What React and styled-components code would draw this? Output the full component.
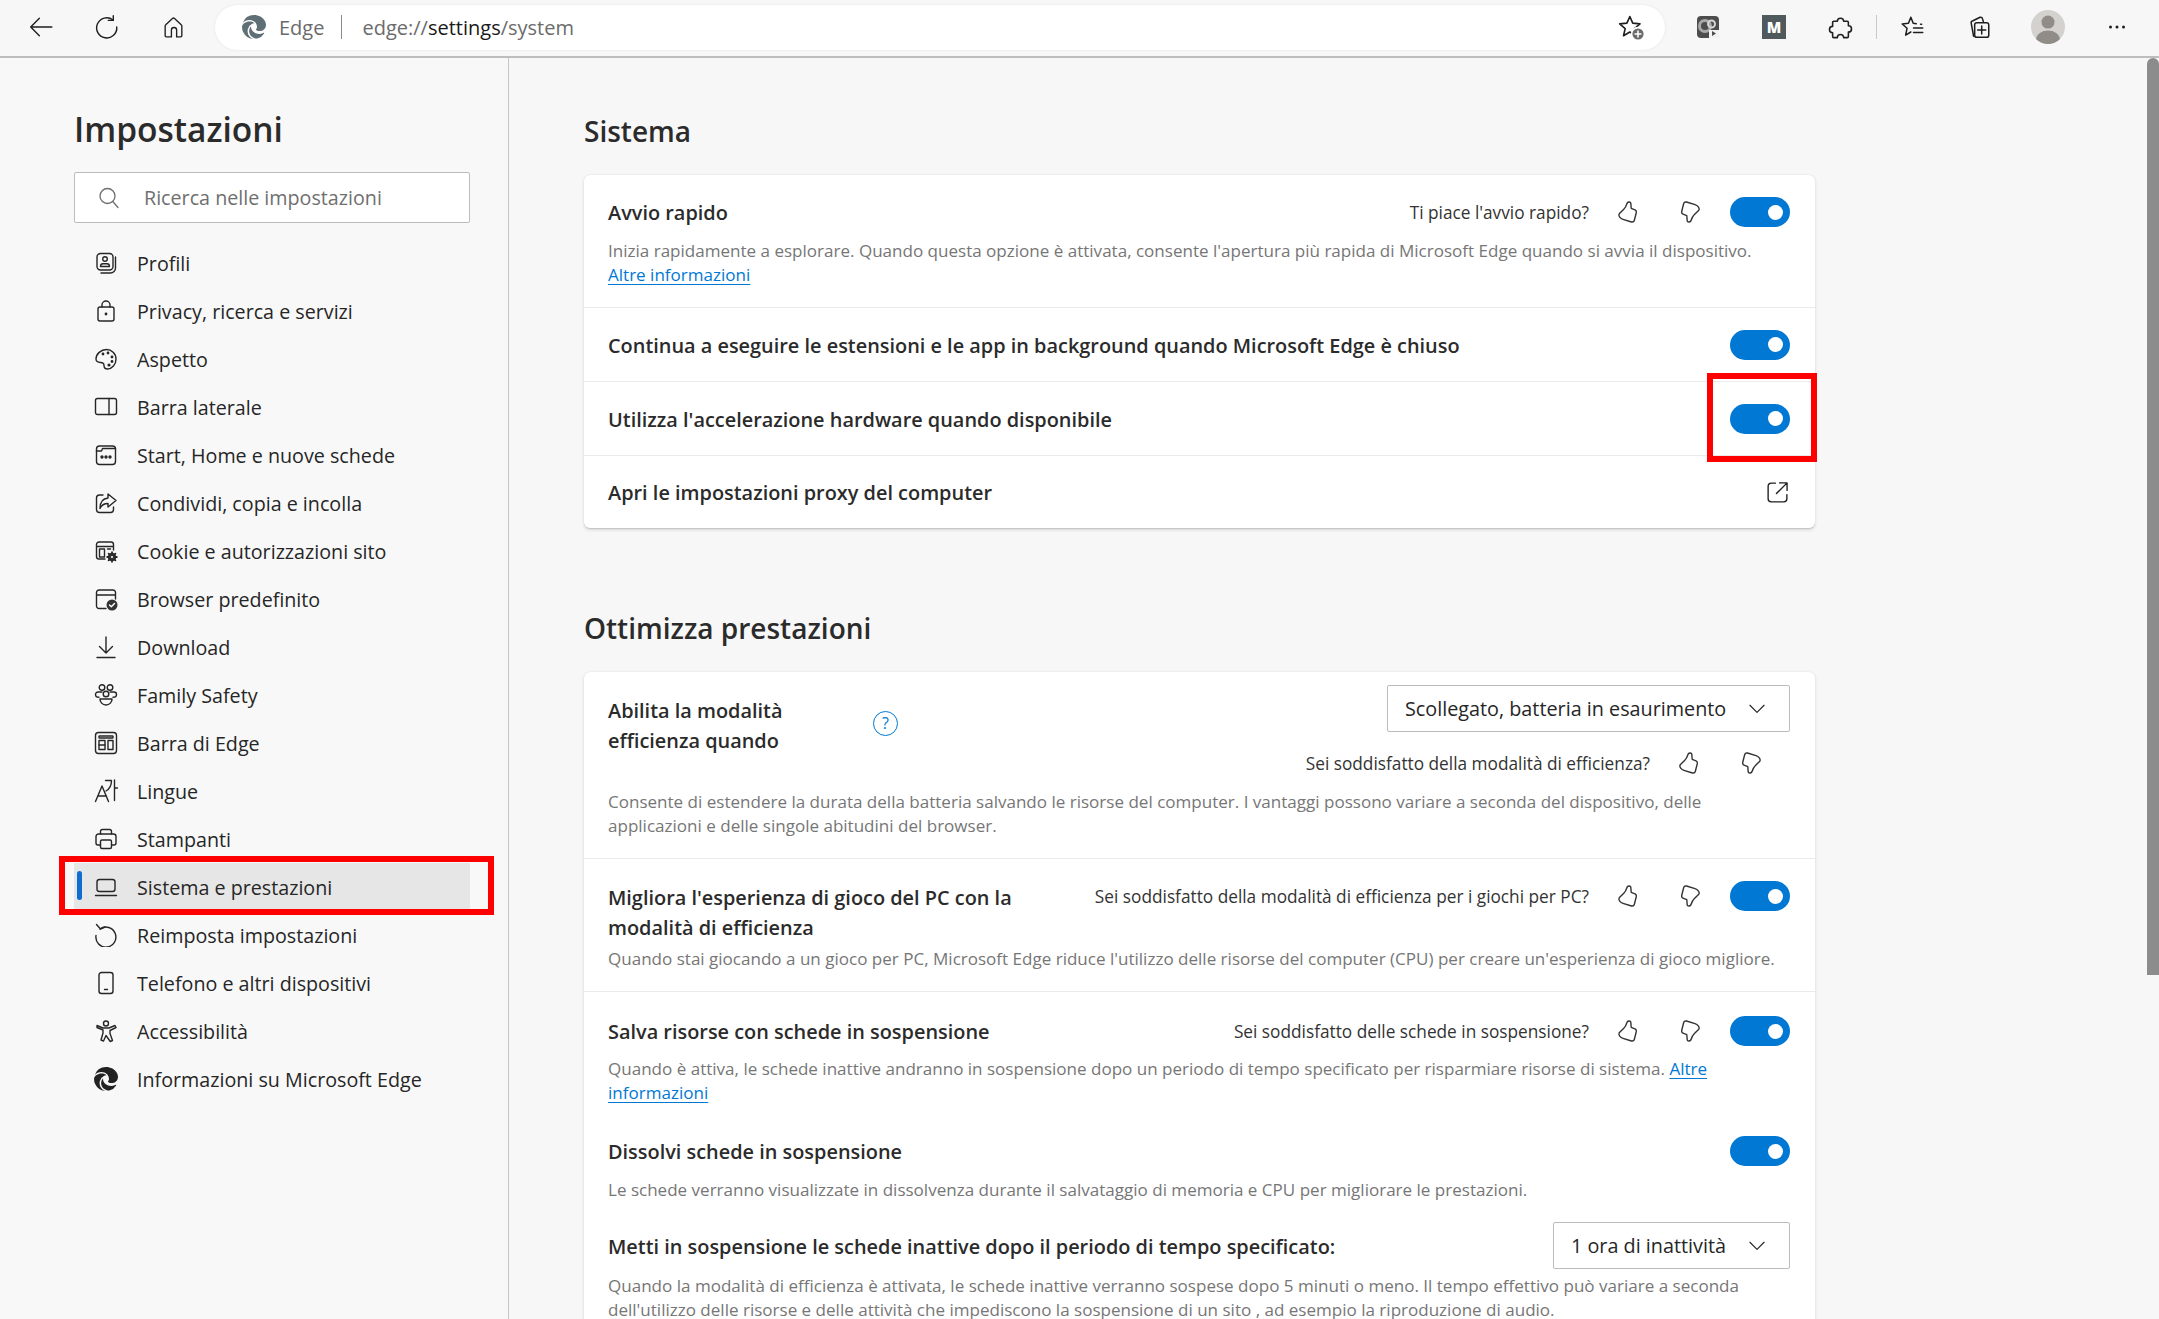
import styled, { createGlobalStyle } from "styled-components"
import { BsBrowserEdge } from "react-icons/bs"

const GlobalStyle = createGlobalStyle`
html, body {
  margin: 0;
  height: 100%;
  background: #f7f7f7;
  overflow: hidden;
}
* { box-sizing: border-box; }
body {
  font-family: "Open Sans", "Noto Sans", sans-serif;
  color: #1f1f1f;
}
`

const Page = styled.div`
height: 1319px;
display: flex;
flex-direction: column;
overflow: hidden;
`

/* browser chrome */
const Toolbar = styled.header`
height: 58px;
flex: none;
display: flex;
align-items: center;
padding: 0 9px 2px 8px;
background: #f7f7f7;
border-bottom: 2px solid #bdbdbd;
`
const ToolButton = styled.div`
width: 66px;
height: 40px;
flex: none;
display: flex;
align-items: center;
justify-content: center;
margin-left: ${p => p.$gap || 0}px;
color: #1f1f1f;
`
const AddressBar = styled.div`
width: 1450px;
height: 45px;
margin-left: 9px;
margin-right: 10px;
flex: none;
display: flex;
align-items: center;
background: #fff;
border-radius: 23px;
padding: 0 20px 0 27px;
box-shadow: 0 0 3px rgba(0, 0, 0, 0.08);
`
const SiteName = styled.span`
font-size: 20px;
color: #6b6b6b;
margin-left: 13px;
`
const AddressSep = styled.span`
width: 1px;
height: 24px;
background: #8a8a8a;
margin: 0 20px 0 17px;
`
const Url = styled.span`
font-size: 20px;
color: #6b6b6b;
flex: 1;
b { font-weight: 400; color: #1a1a1a; }
`
const ToolSep = styled.div`
width: 1px;
height: 24px;
background: #c8c8c8;
margin: 0 3px;
flex: none;
`
const MBadge = styled.div`
width: 24px;
height: 24px;
background: #50595b;
color: #fff;
font-size: 15px;
font-weight: 800;
display: flex;
align-items: center;
justify-content: center;
`
const Body = styled.div`
flex: 1;
display: flex;
min-height: 0;
`

/* left column */
const Sidebar = styled.aside`
width: 509px;
flex: none;
padding: 53px 38px 0 74px;
background: #f8f8f8;
border-right: 1px solid #c6c6c6;
`
const PageTitle = styled.h1`
margin: 0 0 25px 0;
font-size: 33.5px;
line-height: 36px;
font-weight: 600;
color: #2b2b2b;
`
const SearchBox = styled.div`
height: 51px;
display: flex;
align-items: center;
gap: 23px;
padding-left: 22px;
background: #fff;
border: 1px solid #bcbcbc;
border-radius: 2px;
margin-bottom: 16px;
font-size: 19.7px;
color: #6f6f6f;
`
const NavList = styled.nav`
display: flex;
flex-direction: column;
`
const NavItem = styled.div`
position: relative;
height: 48px;
display: flex;
align-items: center;
gap: 19px;
padding-left: 20px;
font-size: 19.7px;
color: #262626;
background: ${p => (p.$active ? "#e6e6e6" : "transparent")};
${p => p.$active && `
  &::before {
    content: "";
    position: absolute;
    left: 3px;
    top: 8px;
    width: 5px;
    height: 29px;
    border-radius: 3px;
    background: #0f6cd0;
  }
  &::after {
    content: "";
    position: absolute;
    left: -15px;
    right: -24px;
    top: -7px;
    bottom: -4px;
    border: 6px solid #ff0000;
  }
`}
`

/* right column */
const Main = styled.main`
flex: 1;
min-width: 0;
padding: 55px 332px 0 75px;
overflow: hidden;
`
const ScrollTrack = styled.div`
width: 12px;
flex: none;
`
const ScrollThumb = styled.div`
width: 12px;
height: 917px;
background: #8c8c8c;
border-radius: 6px 6px 0 0;
`
const SectionTitle = styled.h2`
margin: ${p => p.$top || 0}px 0 26px;
font-size: 28px;
line-height: 36px;
font-weight: 600;
color: #2b2b2b;
`
const Card = styled.section`
background: #fff;
border-radius: 6px;
box-shadow: 0 1.6px 3.6px rgba(0, 0, 0, 0.13), 0 0.3px 0.9px rgba(0, 0, 0, 0.11);
`
const Row = styled.div`
min-height: ${p => p.$h}px;
padding: ${p => p.$top || 0}px 25px 0 24px;
border-bottom: ${p => (p.$line ? "1px solid #ebebeb" : "none")};
display: ${p => (p.$center ? "flex" : "block")};
align-items: center;
justify-content: space-between;
&:last-child { border-bottom: none; }
`
const RowHead = styled.div`
display: flex;
align-items: ${p => p.$align || "center"};
justify-content: space-between;
`
const Label = styled.div`
font-size: 19.9px;
line-height: 30px;
margin-top: 2px;
font-weight: 600;
color: #2b2b2b;
`
const Desc = styled.p`
margin: ${p => p.$top || 0}px 0 0;
font-size: 17.05px;
line-height: 24.4px;
color: #767676;
white-space: nowrap;
`
const Link = styled.a`
color: #0078d4;
text-decoration: underline;
text-underline-offset: 3px;
text-decoration-thickness: 1px;
`
const Feedback = styled.div`
display: flex;
align-items: center;
height: 30px;
padding-right: ${p => p.$pad || 0}px;
margin-top: ${p => p.$top || 0}px;
`
const FeedbackText = styled.span`
font-size: 17.25px;
color: #333;
margin-right: 8px;
`
const ThumbBtn = styled.div`
width: 62px;
display: flex;
justify-content: center;
color: #333;
transform: ${p => (p.$down ? "rotate(180deg)" : "none")};
`
const Controls = styled.div`
display: flex;
align-items: center;
gap: 9px;
`
const Toggle = styled.div`
position: relative;
width: 60px;
height: 30px;
flex: none;
border-radius: 15px;
background: #0078d4;
&::before {
  content: "";
  position: absolute;
  right: 7px;
  top: 7.5px;
  width: 15px;
  height: 15px;
  border-radius: 50%;
  background: #fff;
}
${p => p.$marked && `
  &::after {
    content: "";
    position: absolute;
    left: -23px;
    right: -27px;
    top: -31px;
    bottom: -28px;
    border: 6px solid #ff0000;
  }
`}
`
const Select = styled.div`
width: ${p => p.$w}px;
height: 47px;
flex: none;
display: flex;
align-items: center;
justify-content: space-between;
padding: 0 22px 0 17px;
border: 1px solid #bcbcbc;
border-radius: 2px;
background: #fff;
font-size: 19.8px;
color: #262626;
`
const EfficiencyGrid = styled.div`
display: flex;
justify-content: space-between;
`
const LabelGroup = styled.div`
display: flex;
align-items: center;
height: 60px;
margin-top: 10px;
`
const LabelBox = styled.div`
width: 265px;
`
const HelpMark = styled.span`
width: 25px;
height: 25px;
margin-bottom: 4px;
border-radius: 50%;
border: 1.5px solid #0078d4;
color: #0078d4;
font-size: 16px;
display: flex;
align-items: center;
justify-content: center;
`
const RightStack = styled.div`
display: flex;
flex-direction: column;
align-items: flex-end;
`

const Svg = styled.svg.attrs(p => ({
  viewBox: "0 0 24 24",
  width: p.$size || 24,
  height: p.$size || 24,
  fill: "none",
  stroke: "currentColor",
  strokeWidth: p.$stroke ?? 1.4,
  strokeLinecap: "round",
  strokeLinejoin: "round",
}))`
flex: none;
display: block;
`

const STAR = "M11 3l2.5 5.7 6.2.6-4.7 4.1 1.4 6.1L11 16.3 5.6 19.5 7 13.4 2.3 9.3l6.2-.6z"

const icons = {
  back: <path d="M22 12H2.5M10.5 4l-8 8 8 8" />,
  reload: <><path d="M17.5 5.5A9.3 9.3 0 1 0 21 12" /><path d="M17.8 1.5v4.4h-4.6" /></>,
  home: <path d="M4 20V10.5c0-.5.2-.9.6-1.2l6.4-6a1.5 1.5 0 0 1 2 0l6.4 6c.4.3.6.7.6 1.2V20a1 1 0 0 1-1 1h-4v-6.5a2.5 2.5 0 0 0-5 0V21H5a1 1 0 0 1-1-1z" />,
  puzzle: <path d="M6 6.500h3.200a2.800 2.800 0 0 1 5.600 0H18a1 1 0 0 1 1 1v3a2.800 2.800 0 0 1 0 5.600V20a1 1 0 0 1-1 1h-3.200a2.800 2.800 0 0 0-5.600 0H6a1 1 0 0 1-1-1v-3.400a2.800 2.800 0 0 1 0-5.600V7.500a1 1 0 0 1 1-1z" />,
  favs: <><path d="M10 3l2.200 5.600 2.800.3M20 9.500h-1M12.500 13H21M12.500 17H21M10 3L7.800 8.600 2 9.200l4.500 4-1.300 6.300L10 16.600" /></>,
  collections: <><path d="M7 20.500 4.800 8.500a2 2 0 0 1 1.600-2.300L13 3a2 2 0 0 1 2.300 1.500L16 7" /><rect x="8" y="8" width="13" height="13.500" rx="2" /><path d="M14.500 11v7.500M10.800 14.700h7.400" /></>,
  search: <><circle cx="10.500" cy="10" r="7.500" /><path d="M15.800 15.500 21 21.500" /></>,
  profile: <><rect x="3" y="2.500" width="16" height="16.500" rx="3.500" /><circle cx="11" cy="8" r="2.300" /><path d="M6.500 15.500c0-1.700 1-2.700 2.500-2.700h4c1.500 0 2.500 1 2.500 2.700zM21.500 6v11a5 5 0 0 1-5 5H7" /></>,
  lock: <><rect x="4" y="8" width="16" height="14" rx="2" /><path d="M8 8V6a4 4 0 0 1 8 0v2" /><circle cx="12" cy="15" r=".7" fill="currentColor" /></>,
  palette: <><path d="M12.500 2.500c5 0 9.500 4 9.500 9.500s-4 10-8.500 10c-2.500 0-3.500-1.500-3.500-3.500 0-2.500-1.500-3-3.500-3C3.500 15.500 2 14 2 12 2 7 7 2.500 12.500 2.500z" /><circle cx="9" cy="7" r=".7" fill="currentColor" /><circle cx="14" cy="6" r=".7" fill="currentColor" /><circle cx="18" cy="10" r=".7" fill="currentColor" /><circle cx="18" cy="14.500" r=".7" fill="currentColor" /><circle cx="15" cy="18" r=".9" fill="currentColor" /></>,
  sidebar: <><rect x="1.500" y="3.500" width="21" height="16" rx="2" /><path d="M15 3.500v16" /></>,
  start: <><rect x="2.500" y="3" width="19" height="18.500" rx="3" /><path d="M2.500 8h5l1-2.500h13" /><circle cx="8" cy="14" r="1" fill="currentColor" /><circle cx="12" cy="14" r="1" fill="currentColor" /><circle cx="16" cy="14" r="1" fill="currentColor" /></>,
  share: <><path d="M9 4H5.500a3 3 0 0 0-3 3v11.500a3 3 0 0 0 3 3h11a3 3 0 0 0 3-3V16" /><path d="M14 3l8 6.500-8 6.500v-3.500c-4 0-6.500 1.500-8 5 0-6 3-10 8-10.500z" /></>,
  cookie: <><path d="M11 20H5a2.500 2.500 0 0 1-2.500-2.500v-12A2.500 2.500 0 0 1 5 3h12a2.500 2.500 0 0 1 2.500 2.500V11M2.500 7.500h17" /><rect x="5.500" y="10" width="5" height="8" /><path d="M13.500 10h3" /><circle cx="18" cy="18" r="3" fill="#333" stroke="#333" strokeWidth="2.500" /><path d="M18 13.200v1.300M18 21.500v1.300M13.200 18h1.300M21.500 18h1.300M14.600 14.600l1 1M20.400 20.400l1 1M21.400 14.600l-1 1M15.600 20.400l-1 1" strokeWidth="1.800" /><circle cx="18" cy="18" r="1.100" fill="#f8f8f8" stroke="none" /></>,
  browser: <><path d="M12 21.500H5a2.500 2.500 0 0 1-2.500-2.500V5.500A2.500 2.500 0 0 1 5 3h14a2.500 2.500 0 0 1 2.500 2.500V12M2.500 8h19" /><circle cx="18" cy="18" r="5.500" fill="#333" stroke="none" /><path d="M15.500 18l1.800 1.800 3.200-3.300" stroke="#fff" /></>,
  download: <path d="M12 2v16M5.500 11.500 12 18l6.500-6.500M3 22.500h18" />,
  family: <><circle cx="8" cy="4.500" r="2.800" /><circle cx="16" cy="4.500" r="2.800" /><circle cx="12" cy="11" r="2.800" /><path d="M8 9H4a2.500 2.500 0 0 0-2.500 2.500c0 1.500 1.500 2.800 3.500 2.800M16 9h4a2.500 2.500 0 0 1 2.500 2.500c0 1.500-1.500 2.800-3.500 2.800M6 16h12c.3 3-2.500 6-6 6s-6.300-3-6-6z" /></>,
  edgebar: <><rect x="1.500" y="1.500" width="21" height="21" rx="3" /><rect x="5" y="5" width="14" height="2" rx=".5" /><rect x="5" y="9.500" width="6" height="9" /><rect x="14" y="9.500" width="5" height="9" /><path d="M5 14h6" /></>,
  language: <path d="M1.500 22.500 8 7l6.500 15.500M4 17h8.500M11.500 1.500h6c0 5-2 8.500-5.500 10.500M20.500 1v20.500M20.500 9h3" />,
  print: <><path d="M6.500 7V4.500a2 2 0 0 1 2-2h7a2 2 0 0 1 2 2V7" /><path d="M6.500 18H4a2 2 0 0 1-2-2v-6.500A2.500 2.500 0 0 1 4.500 7h15A2.500 2.500 0 0 1 22 9.500V16a2 2 0 0 1-2 2h-2.500" /><rect x="6.500" y="13" width="11" height="8.500" rx="1.500" /></>,
  laptop: <><rect x="3" y="4.500" width="18" height="12" rx="2.500" /><path d="M1.500 20.500h21" /></>,
  reset: <><path d="M6 6a10 10 0 1 1-4 6.500" /><path d="M2.500 1.500 6.500 6 11 4" /></>,
  phone: <><rect x="5" y="1.500" width="14" height="21" rx="2.500" /><path d="M10.500 18.500h3" /></>,
  access: <><circle cx="12" cy="4.500" r="2.500" /><path d="M3 6.500l6 2.500h6l6-2.500 1 2-6 3v3l2.500 7-2.200 1L12 16.500 9.500 22 7 21l2-7v-3l-6-2.500z" /></>,
  external: <><path d="M10 3H6a3 3 0 0 0-3 3v12a3 3 0 0 0 3 3h12a3 3 0 0 0 3-3v-4" /><path d="M14 2.800h7.200V10M21 3l-10 10" /></>,
  thumb: <path d="M11.200 3C12 1.800 14.500 1.500 14.800 3.200L15.200 8.300 19 9.800C20 10.200 20.500 11.500 20.200 13L18.300 20.500C18 21.700 16.800 22.200 15.500 22L7 19.300C4.500 18.500 2 16 3.200 13.800L7.800 9.300C9.500 7.800 10.500 5 11.200 3Z" />,
  chevron: <path d="M3.500 7.500 12 16l8.500-8.500" />,
}

const Icon = ({ name, size, stroke }) => (
  <Svg $size={size} $stroke={stroke}>{icons[name]}</Svg>
)

const FavStar = () => (
  <Svg $size={28}>
    <path d={STAR} />
    <circle cx="18" cy="18" r="5.500" fill="#6b6b6b" stroke="#fff" />
    <path d="M18 15.500v5M15.500 18h5" stroke="#fff" strokeWidth="1.300" />
  </Svg>
)

const ExtOne = () => (
  <Svg $size={24} $stroke={0}>
    <rect x="1" y="1" width="22" height="22" rx="4" fill="#4d4d4d" />
    <circle cx="9" cy="11" r="5.500" fill="none" stroke="#a9a9a9" strokeWidth="3" />
    <circle cx="15.500" cy="9" r="3.500" fill="none" stroke="#d5d5d5" strokeWidth="2" />
    <path d="M13 15h10v6a2 2 0 0 1-2 2h-8z" fill="#f2f2f2" />
    <path d="M16 16v5l4-2.500z" fill="#4d4d4d" />
  </Svg>
)

const Avatar = () => (
  <Svg $size={34} $stroke={0}>
    <circle cx="12" cy="12" r="12" fill="#d3d2cf" />
    <circle cx="12" cy="8.500" r="4.600" fill="#908c87" />
    <path d="M3.500 20.500c1-4 4.500-6 8.500-6s7.500 2 8.500 6a12 12 0 0 1-17 0z" fill="#908c87" />
  </Svg>
)

const Dots = () => (
  <Svg $size={24} $stroke={0}>
    <circle cx="5.500" cy="12" r="1.500" fill="#1f1f1f" />
    <circle cx="12" cy="12" r="1.500" fill="#1f1f1f" />
    <circle cx="18.500" cy="12" r="1.500" fill="#1f1f1f" />
  </Svg>
)

const navItems = [
  ["profile", "Profili"],
  ["lock", "Privacy, ricerca e servizi"],
  ["palette", "Aspetto"],
  ["sidebar", "Barra laterale"],
  ["start", "Start, Home e nuove schede"],
  ["share", "Condividi, copia e incolla"],
  ["cookie", "Cookie e autorizzazioni sito"],
  ["browser", "Browser predefinito"],
  ["download", "Download"],
  ["family", "Family Safety"],
  ["edgebar", "Barra di Edge"],
  ["language", "Lingue"],
  ["print", "Stampanti"],
  ["laptop", "Sistema e prestazioni"],
  ["reset", "Reimposta impostazioni"],
  ["phone", "Telefono e altri dispositivi"],
  ["access", "Accessibilità"],
  ["edge", "Informazioni su Microsoft Edge"],
]

const Thumbs = () => (
  <>
    <ThumbBtn><Icon name="thumb" /></ThumbBtn>
    <ThumbBtn $down><Icon name="thumb" /></ThumbBtn>
  </>
)

const App = () => {
  return (
    <Page>
      <GlobalStyle />
      <Toolbar>
        <ToolButton><Icon name="back" size={26} stroke={1.3} /></ToolButton>
        <ToolButton><Icon name="reload" size={26} stroke={1.3} /></ToolButton>
        <ToolButton><Icon name="home" size={25} stroke={1.3} /></ToolButton>
        <AddressBar>
          <BsBrowserEdge size={24} color="#5f6f76" />
          <SiteName>Edge</SiteName>
          <AddressSep />
          <Url>edge://<b>settings</b>/system</Url>
          <FavStar />
        </AddressBar>
        <ToolButton><ExtOne /></ToolButton>
        <ToolButton><MBadge>M</MBadge></ToolButton>
        <ToolButton><Icon name="puzzle" size={27} /></ToolButton>
        <ToolSep />
        <ToolButton><Icon name="favs" size={26} /></ToolButton>
        <ToolButton><Icon name="collections" size={26} /></ToolButton>
        <ToolButton $gap={3}><Avatar /></ToolButton>
        <ToolButton $gap={3}><Dots /></ToolButton>
      </Toolbar>
      <Body>
        <Sidebar>
          <PageTitle>Impostazioni</PageTitle>
          <SearchBox>
            <Icon name="search" stroke={1.3} />
            <span>Ricerca nelle impostazioni</span>
          </SearchBox>
          <NavList>
            {navItems.map(([icon, label]) => (
              <NavItem key={label} $active={label === "Sistema e prestazioni"}>
                {icon === "edge" ? <BsBrowserEdge size={24} color="#222" /> : <Icon name={icon} />}
                <span>{label}</span>
              </NavItem>
            ))}
          </NavList>
        </Sidebar>
        <Main>
          <SectionTitle>Sistema</SectionTitle>
          <Card>
            <Row $h={133} $top={21} $line>
              <RowHead>
                <Label>Avvio rapido</Label>
                <Controls>
                  <Feedback>
                    <FeedbackText>Ti piace l'avvio rapido?</FeedbackText>
                    <Thumbs />
                  </Feedback>
                  <Toggle />
                </Controls>
              </RowHead>
              <Desc $top={11}>
                Inizia rapidamente a esplorare. Quando questa opzione è attivata, consente l'apertura più rapida di Microsoft Edge quando si avvia il dispositivo.
                <br />
                <Link>Altre informazioni</Link>
              </Desc>
            </Row>
            <Row $h={74} $line $center>
              <Label>Continua a eseguire le estensioni e le app in background quando Microsoft Edge è chiuso</Label>
              <Toggle />
            </Row>
            <Row $h={74} $line $center>
              <Label>Utilizza l'accelerazione hardware quando disponibile</Label>
              <Toggle $marked />
            </Row>
            <Row $h={72} $center>
              <Label>Apri le impostazioni proxy del computer</Label>
              <Icon name="external" size={25} stroke={1.3} />
            </Row>
          </Card>

          <SectionTitle $top={82}>Ottimizza prestazioni</SectionTitle>
          <Card>
            <Row $h={187} $top={13} $line>
              <EfficiencyGrid>
                <LabelGroup>
                  <LabelBox>
                    <Label>Abilita la modalità<br />efficienza quando</Label>
                  </LabelBox>
                  <HelpMark>?</HelpMark>
                </LabelGroup>
                <RightStack>
                  <Select $w={403}>
                    <span>Scollegato, batteria in esaurimento</span>
                    <Icon name="chevron" size={20} />
                  </Select>
                  <Feedback $top={16} $pad={8}>
                    <FeedbackText>Sei soddisfatto della modalità di efficienza?</FeedbackText>
                    <Thumbs />
                  </Feedback>
                </RightStack>
              </EfficiencyGrid>
              <Desc $top={12}>
                Consente di estendere la durata della batteria salvando le risorse del computer. I vantaggi possono variare a seconda del dispositivo, delle
                <br />
                applicazioni e delle singole abitudini del browser.
              </Desc>
            </Row>
            <Row $h={133} $top={22} $line>
              <RowHead $align="flex-start">
                <Label>Migliora l'esperienza di gioco del PC con la<br />modalità di efficienza</Label>
                <Controls>
                  <Feedback>
                    <FeedbackText>Sei soddisfatto della modalità di efficienza per i giochi per PC?</FeedbackText>
                    <Thumbs />
                  </Feedback>
                  <Toggle />
                </Controls>
              </RowHead>
              <Desc $top={4}>
                Quando stai giocando a un gioco per PC, Microsoft Edge riduce l'utilizzo delle risorse del computer (CPU) per creare un'esperienza di gioco migliore.
              </Desc>
            </Row>
            <Row $h={128} $top={23}>
              <RowHead>
                <Label>Salva risorse con schede in sospensione</Label>
                <Controls>
                  <Feedback>
                    <FeedbackText>Sei soddisfatto delle schede in sospensione?</FeedbackText>
                    <Thumbs />
                  </Feedback>
                  <Toggle />
                </Controls>
              </RowHead>
              <Desc $top={10}>
                Quando è attiva, le schede inattive andranno in sospensione dopo un periodo di tempo specificato per risparmiare risorse di sistema. <Link>Altre</Link>
                <br />
                <Link>informazioni</Link>
              </Desc>
            </Row>
            <Row $h={90} $top={15}>
              <RowHead>
                <Label>Dissolvi schede in sospensione</Label>
                <Toggle />
              </RowHead>
              <Desc $top={11}>
                Le schede verranno visualizzate in dissolvenza durante il salvataggio di memoria e CPU per migliorare le prestazioni.
              </Desc>
            </Row>
            <Row $h={120} $top={12}>
              <RowHead>
                <Label>Metti in sospensione le schede inattive dopo il periodo di tempo specificato:</Label>
                <Select $w={237}>
                  <span>1 ora di inattività</span>
                  <Icon name="chevron" size={20} />
                </Select>
              </RowHead>
              <Desc $top={5}>
                Quando la modalità di efficienza è attivata, le schede inattive verranno sospese dopo 5 minuti o meno. Il tempo effettivo può variare a seconda
                <br />
                dell'utilizzo delle risorse e delle attività che impediscono la sospensione di un sito , ad esempio la riproduzione di audio.
              </Desc>
            </Row>
          </Card>
        </Main>
        <ScrollTrack><ScrollThumb /></ScrollTrack>
      </Body>
    </Page>
  )
}

export default App
